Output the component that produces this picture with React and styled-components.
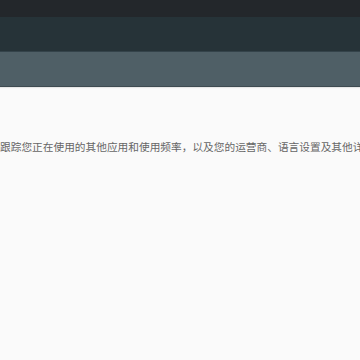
import React from "react";
import styled, { createGlobalStyle } from "styled-components";

const Global = createGlobalStyle`
  html, body { margin: 0; padding: 0; background: #fafafa; }
  #root { width: 360px; height: 360px; overflow: hidden; }
`;

const Page = styled.div`
  width: 360px;
  height: 360px;
  display: flex;
  flex-direction: column;
  background: #fafafa;
  overflow: hidden;
`;

const StatusBar = styled.div`
  height: 17px;
  background: #23272b;
`;

const AppBar = styled.div`
  height: 34px;
  background: #263338;
  border-bottom: 1px solid #34434a;
`;

const SubBar = styled.div`
  height: 34px;
  background: #4f5f66;
  border-bottom: 1px solid #3e4b51;
  box-shadow: 0 1px 1px rgba(0,0,0,0.08);
`;

const Body = styled.div`
  flex: 1;
  padding-top: 52px;
  overflow: hidden;
`;

const Line = styled.p`
  margin: 0;
  white-space: nowrap;
  font-family: "Noto Sans CJK SC", "Noto Sans", sans-serif;
  font-size: 10.7px;
  line-height: 16px;
  color: #666;
`;

export default function App() {
  return (
    <Page>
      <Global />
      <StatusBar />
      <AppBar />
      <SubBar />
      <Body>
        <Line>跟踪您正在使用的其他应用和使用频率，以及您的运营商、语言设置及其他详细信息。</Line>
      </Body>
    </Page>
  );
}
